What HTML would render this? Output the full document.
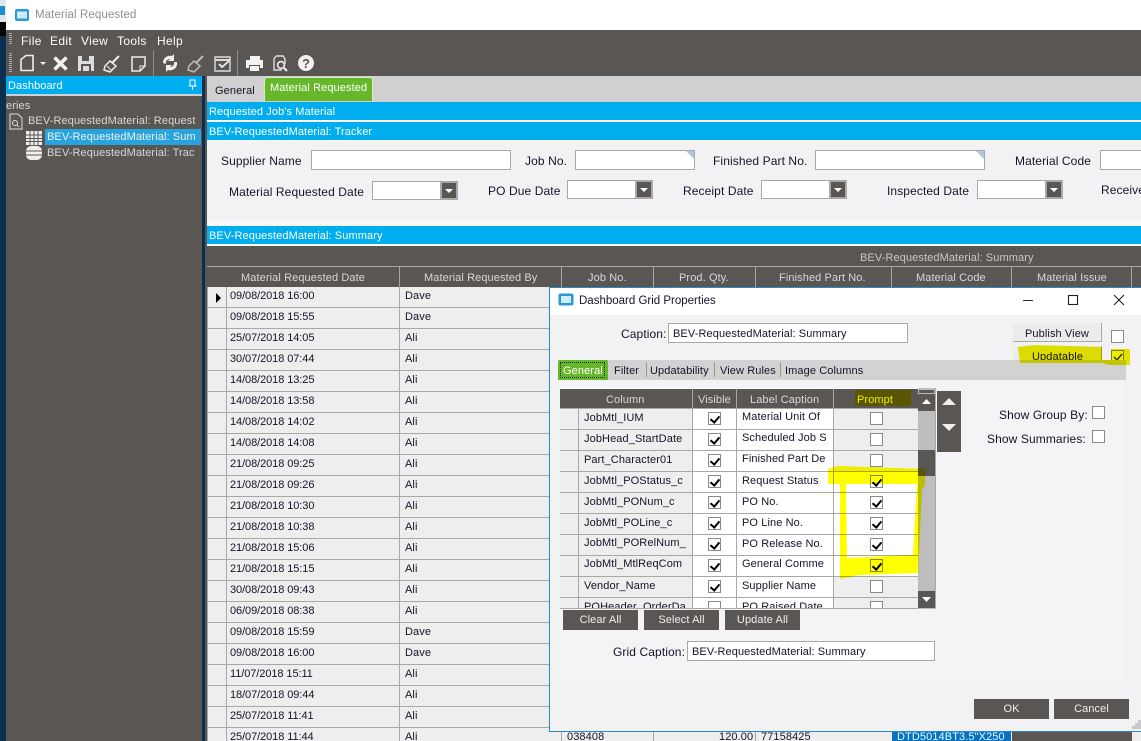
<!DOCTYPE html>
<html><head><meta charset="utf-8"><title>Material Requested</title>
<style>
html,body{margin:0;padding:0;background:#fff}
#p{position:relative;width:1141px;height:741px;overflow:hidden;font:11px "Liberation Sans",sans-serif;color:#141428;letter-spacing:.1px}
#p div{position:absolute;box-sizing:border-box}
.t{position:absolute;white-space:nowrap;line-height:14px;height:14px;margin-top:1px}
.t.f{font-size:12px;letter-spacing:.1px;margin-top:0}
.t.d{letter-spacing:-.08px}
.t.m{font-size:12px;letter-spacing:.35px;margin-top:0;color:#fff}
.w{color:#fff}.l{color:#d8d8d8}
.cy{background:#00aeef;left:207px;width:934px;height:18px;color:#fff;padding:3px 0 0 2px;line-height:14px;white-space:nowrap}
.in{background:#fff;border:1px solid #a8a8a8}
.co{background:#fff;border:1px solid #a8a8a8;height:19px}
.ar{background:#595654;border:2px solid #a8a8a8}
.ar:after{content:"";position:absolute;left:3px;top:6px;border-left:4px solid transparent;border-right:4px solid transparent;border-top:4px solid #fff}
.vl{width:1px;background:#a8a8a8}
.hl{height:1px;background:#a8a8a8}
.cb{width:13px;height:13px;background:#fff;border:1px solid #8a8a8a}
.on:after{content:"";position:absolute;left:3px;top:1px;width:4px;height:7px;border:solid #000;border-width:0 2px 2px 0;transform:rotate(40deg)}
.dk{background:#595654;color:#f0f0f0;text-align:center;height:20px;line-height:21px}
</style></head><body><div id="p">

<!-- left strip -->
<div style="left:0;top:0;width:6px;height:22px;background:#dfe6ec"></div>
<div style="left:0;top:6px;width:5px;height:9px;background:#1b8fc9"></div>
<div style="left:0;top:22px;width:6px;height:14px;background:#050505"></div>
<div style="left:0;top:36px;width:6px;height:705px;background:#0d2f4f"></div>

<!-- title bar -->
<svg style="position:absolute;left:14px;top:8px" width="16" height="14"><rect x="1" y="1" width="14" height="12" rx="2" fill="#2a9ad6"/><rect x="3" y="3.500" width="10" height="7" fill="#cfeaf8"/></svg>
<span class="t" style="left:35px;top:8px;color:#8f8f8f;font-size:11.5px;margin-top:0">Material Requested</span>

<!-- menu + toolbar -->
<div style="left:6px;top:30px;width:1135px;height:46px;background:#595654"></div>
<div style="left:9px;top:33px;width:3px;height:12px;background:repeating-linear-gradient(#a8a8a8 0 1px,transparent 1px 2px)"></div>
<div style="left:9px;top:53px;width:3px;height:20px;background:repeating-linear-gradient(#a8a8a8 0 1px,transparent 1px 2px)"></div>
<span class="t m" style="left:21px;top:34px">File</span>
<span class="t m" style="left:50px;top:34px">Edit</span>
<span class="t m" style="left:81px;top:34px">View</span>
<span class="t m" style="left:117px;top:34px">Tools</span>
<span class="t m" style="left:157px;top:34px">Help</span>
<svg style="position:absolute;left:0;top:50px" width="330" height="26" fill="none">
<path d="M21 9.500 26 5.500h7v15H21z" stroke="#eee" stroke-width="1.600"/>
<path d="M40 12h6l-3 3z" fill="#eee"/>
<path d="M54.500 7.500l12 12M66.500 7.500l-12 12" stroke="#f2f2f2" stroke-width="3.600"/>
<path d="M78 6h16v15H78z" fill="#ddd"/><path d="M82 6h7v5h-7z" fill="#595654"/><path d="M81 14h10v7H81z" fill="#595654"/><path d="M83 16h6v5h-6z" fill="#ddd"/>
<path d="M119 6l-7 7" stroke="#eee" stroke-width="2"/><path d="M110 11l6 5-6 6-6-2 1-4z" stroke="#eee" stroke-width="1.500"/><path d="M107 16l4 4" stroke="#eee"/>
<path d="M132 7h13v9l-5 5h-8z" stroke="#eee" stroke-width="1.500"/><path d="M140 21v-5h5" stroke="#eee"/>
<path d="M153.500 0v26" stroke="#8c8c8c"/>
<path d="M163 13a7 7 0 0 1 9-7l2-2v7h-6l2-2a4 4 0 0 0-4 5zM177 12a7 7 0 0 1-9 8l-2 2v-7h6l-2 2a4 4 0 0 0 4-5z" fill="#eee"/>
<path d="M203 6l-7 7" stroke="#bbb" stroke-width="2"/><path d="M194 11l6 5-6 6-6-2 1-4z" stroke="#bbb" stroke-width="1.500"/>
<path d="M215 7h15v14h-15z" stroke="#ddd" stroke-width="1.400"/><path d="M215 10h15" stroke="#ddd" stroke-width="2"/><path d="M219 14l3 3 7-6" stroke="#eee" stroke-width="1.800"/>
<path d="M237.500 0v26" stroke="#8c8c8c"/>
<path d="M250 6h10v4h-10zM246 10h17v8h-3v-3h-11v3h-3zM250 16h9v5h-9z" fill="#f2f2f2"/>
<path d="M276 6h7l2 3v5M276 6l-2 3v11h8" stroke="#ddd" stroke-width="1.400"/><circle cx="281" cy="15" r="3.400" stroke="#eee" stroke-width="1.600"/><path d="M284 18l3 3" stroke="#eee" stroke-width="2"/>
<circle cx="306" cy="13" r="8" fill="#f2f2f2"/>
<text x="306" y="18" text-anchor="middle" font-family="Liberation Sans" font-weight="bold" font-size="13" fill="#595654">?</text>
</svg>

<!-- left panel -->
<div style="left:6px;top:76px;width:196px;height:665px;background:#595654"></div>
<div style="left:6px;top:76px;width:196px;height:18px;background:#00aeef"></div>
<div style="left:6px;top:94px;width:196px;height:2px;background:#d0d0d0"></div>
<span class="t w" style="left:8px;top:78px">Dashboard</span>
<svg style="position:absolute;left:187px;top:79px" width="11" height="12"><path d="M3 1h5v6H3zM1.500 7h8M5.500 7v4" stroke="#fff" fill="none"/></svg>
<div style="left:202px;top:76px;width:3px;height:665px;background:#0d2f4f"></div>
<div style="left:205px;top:76px;width:2px;height:665px;background:#595654"></div>
<span class="t l" style="left:6px;top:98px">eries</span>
<svg style="position:absolute;left:9px;top:113px" width="14" height="17" fill="none"><path d="M1 1h8l4 4v11H1z" stroke="#ddd"/><circle cx="6" cy="10" r="2.500" stroke="#ddd"/><path d="M8 12l2 2" stroke="#ddd"/></svg>
<span class="t l" style="left:28px;top:113px">BEV-RequestedMaterial: Request</span>
<div style="left:45px;top:129px;width:156px;height:16px;background:#29a3dd"></div>
<svg style="position:absolute;left:26px;top:131px" width="16" height="14"><rect width="16" height="14" fill="#eee"/><path d="M0 4h16M0 7.500h16M0 10.500h16M4 0v14M8 0v14M12 0v14" stroke="#595654"/></svg>
<span class="t l" style="left:47px;top:129px;color:#f0f0f0">BEV-RequestedMaterial: Sum</span>
<svg style="position:absolute;left:26px;top:146px" width="16" height="14"><rect width="16" height="14" rx="5" fill="#eee"/><path d="M0 5h16M0 9h16" stroke="#595654"/></svg>
<span class="t l" style="left:47px;top:145px">BEV-RequestedMaterial: Trac</span>

<!-- main tabs -->
<div style="left:207px;top:76px;width:934px;height:26px;background:#d0d0d0"></div>
<span class="t" style="left:215px;top:83px">General</span>
<div style="left:264px;top:77px;width:109px;height:24px;background:#66b82a;border:1px solid #d8ecc8;border-bottom:0;border-radius:3px 3px 0 0"></div>
<span class="t w" style="left:270px;top:80px">Material Requested</span>
<div class="cy" style="top:102px">Requested Job's Material</div>
<div style="left:207px;top:120px;width:934px;height:2px;background:#fff"></div>
<div class="cy" style="top:122px">BEV-RequestedMaterial: Tracker</div>

<!-- filter panel -->
<div style="left:207px;top:140px;width:934px;height:86px;background:#f8f8fa"></div>
<div style="left:207px;top:142px;width:934px;height:79px;background:#f2f2f5"></div>
<span class="t f" style="left:221px;top:154px">Supplier Name</span>
<div class="in" style="left:311px;top:150px;width:200px;height:20px"></div>
<span class="t f" style="left:525px;top:154px">Job No.</span>
<div class="in" style="left:575px;top:150px;width:120px;height:20px"></div>
<svg style="position:absolute;left:686px;top:151px" width="8" height="8"><path d="M0 0h8v8z" fill="#aec6e4"/></svg>
<span class="t f" style="left:713px;top:154px">Finished Part No.</span>
<div class="in" style="left:815px;top:150px;width:170px;height:20px"></div>
<svg style="position:absolute;left:976px;top:151px" width="8" height="8"><path d="M0 0h8v8z" fill="#aec6e4"/></svg>
<span class="t f" style="left:1015px;top:154px">Material Code</span>
<div class="in" style="left:1100px;top:150px;width:60px;height:20px"></div>

<span class="t f" style="left:229px;top:185px">Material Requested Date</span>
<div class="co" style="left:372px;top:181px;width:86px"><div class="ar" style="right:-1px;top:-1px;width:18px;height:19px"></div></div>
<span class="t f" style="left:488px;top:184px">PO Due Date</span>
<div class="co" style="left:567px;top:180px;width:86px"><div class="ar" style="right:-1px;top:-1px;width:18px;height:19px"></div></div>
<span class="t f" style="left:683px;top:184px">Receipt Date</span>
<div class="co" style="left:761px;top:180px;width:86px"><div class="ar" style="right:-1px;top:-1px;width:18px;height:19px"></div></div>
<span class="t f" style="left:887px;top:184px">Inspected Date</span>
<div class="co" style="left:977px;top:180px;width:86px"><div class="ar" style="right:-1px;top:-1px;width:18px;height:19px"></div></div>
<span class="t f" style="left:1101px;top:183px">Receive</span>

<div class="cy" style="top:226px">BEV-RequestedMaterial: Summary</div>

<!-- main grid -->
<div style="left:207px;top:244px;width:934px;height:497px;background:#fff"></div>
<div style="left:207px;top:246px;width:934px;height:41px;background:#595654"></div>
<div style="left:207px;top:266px;width:934px;height:1px;background:#a8a8a8"></div>
<span class="t" style="left:860px;top:250px;color:#c8c8c8">BEV-RequestedMaterial: Summary</span>
<div class="vl" style="left:399px;top:267px;height:20px"></div><div class="vl" style="left:561px;top:267px;height:20px"></div><div class="vl" style="left:653px;top:267px;height:20px"></div><div class="vl" style="left:755px;top:267px;height:20px"></div><div class="vl" style="left:891px;top:267px;height:20px"></div><div class="vl" style="left:1011px;top:267px;height:20px"></div><div class="vl" style="left:1131px;top:267px;height:20px"></div>
<span class="t l" style="left:241px;top:270px">Material Requested Date</span>
<span class="t l" style="left:424px;top:270px">Material Requested By</span>
<span class="t l" style="left:588px;top:270px">Job No.</span>
<span class="t l" style="left:679px;top:270px">Prod. Qty.</span>
<span class="t l" style="left:779px;top:270px">Finished Part No.</span>
<span class="t l" style="left:916px;top:270px">Material Code</span>
<span class="t l" style="left:1037px;top:270px">Material Issue</span>

<div style="left:207px;top:287px;width:343px;height:454px;background:#eeeeee"></div>
<div class="vl" style="left:207px;top:287px;height:454px"></div>
<div class="vl" style="left:226px;top:287px;height:454px"></div>
<div class="vl" style="left:399px;top:287px;height:454px"></div>
<div class="hl" style="left:207px;top:307px;width:343px"></div><div class="hl" style="left:207px;top:328px;width:343px"></div><div class="hl" style="left:207px;top:349px;width:343px"></div><div class="hl" style="left:207px;top:370px;width:343px"></div><div class="hl" style="left:207px;top:391px;width:343px"></div><div class="hl" style="left:207px;top:412px;width:343px"></div><div class="hl" style="left:207px;top:433px;width:343px"></div><div class="hl" style="left:207px;top:454px;width:343px"></div><div class="hl" style="left:207px;top:475px;width:343px"></div><div class="hl" style="left:207px;top:496px;width:343px"></div><div class="hl" style="left:207px;top:517px;width:343px"></div><div class="hl" style="left:207px;top:538px;width:343px"></div><div class="hl" style="left:207px;top:559px;width:343px"></div><div class="hl" style="left:207px;top:580px;width:343px"></div><div class="hl" style="left:207px;top:601px;width:343px"></div><div class="hl" style="left:207px;top:622px;width:343px"></div><div class="hl" style="left:207px;top:643px;width:343px"></div><div class="hl" style="left:207px;top:664px;width:343px"></div><div class="hl" style="left:207px;top:685px;width:343px"></div><div class="hl" style="left:207px;top:706px;width:343px"></div><div class="hl" style="left:207px;top:727px;width:343px"></div>
<svg style="position:absolute;left:215px;top:292px" width="7" height="12"><path d="M1 1l5 5-5 5z" fill="#000"/></svg>

<span class="t d" style="left:230px;top:288px">09/08/2018 16:00</span><span class="t" style="left:405px;top:288px">Dave</span>
<span class="t d" style="left:230px;top:309px">09/08/2018 15:55</span><span class="t" style="left:405px;top:309px">Dave</span>
<span class="t d" style="left:230px;top:330px">25/07/2018 14:05</span><span class="t" style="left:405px;top:330px">Ali</span>
<span class="t d" style="left:230px;top:351px">30/07/2018 07:44</span><span class="t" style="left:405px;top:351px">Ali</span>
<span class="t d" style="left:230px;top:372px">14/08/2018 13:25</span><span class="t" style="left:405px;top:372px">Ali</span>
<span class="t d" style="left:230px;top:393px">14/08/2018 13:58</span><span class="t" style="left:405px;top:393px">Ali</span>
<span class="t d" style="left:230px;top:414px">14/08/2018 14:02</span><span class="t" style="left:405px;top:414px">Ali</span>
<span class="t d" style="left:230px;top:435px">14/08/2018 14:08</span><span class="t" style="left:405px;top:435px">Ali</span>
<span class="t d" style="left:230px;top:456px">21/08/2018 09:25</span><span class="t" style="left:405px;top:456px">Ali</span>
<span class="t d" style="left:230px;top:477px">21/08/2018 09:26</span><span class="t" style="left:405px;top:477px">Ali</span>
<span class="t d" style="left:230px;top:498px">21/08/2018 10:30</span><span class="t" style="left:405px;top:498px">Ali</span>
<span class="t d" style="left:230px;top:519px">21/08/2018 10:38</span><span class="t" style="left:405px;top:519px">Ali</span>
<span class="t d" style="left:230px;top:540px">21/08/2018 15:06</span><span class="t" style="left:405px;top:540px">Ali</span>
<span class="t d" style="left:230px;top:561px">21/08/2018 15:15</span><span class="t" style="left:405px;top:561px">Ali</span>
<span class="t d" style="left:230px;top:582px">30/08/2018 09:43</span><span class="t" style="left:405px;top:582px">Ali</span>
<span class="t d" style="left:230px;top:603px">06/09/2018 08:38</span><span class="t" style="left:405px;top:603px">Ali</span>
<span class="t d" style="left:230px;top:624px">09/08/2018 15:59</span><span class="t" style="left:405px;top:624px">Dave</span>
<span class="t d" style="left:230px;top:645px">09/08/2018 16:00</span><span class="t" style="left:405px;top:645px">Dave</span>
<span class="t d" style="left:230px;top:666px">11/07/2018 15:11</span><span class="t" style="left:405px;top:666px">Ali</span>
<span class="t d" style="left:230px;top:687px">18/07/2018 09:44</span><span class="t" style="left:405px;top:687px">Ali</span>
<span class="t d" style="left:230px;top:708px">25/07/2018 11:41</span><span class="t" style="left:405px;top:708px">Ali</span>
<span class="t d" style="left:230px;top:729px">25/07/2018 11:44</span><span class="t" style="left:405px;top:729px">Ali</span>

<!-- bottom row behind dialog -->
<div style="left:550px;top:731px;width:591px;height:10px;background:#eeeeee"></div>
<div class="vl" style="left:561px;top:731px;height:10px"></div><div class="vl" style="left:653px;top:731px;height:10px"></div><div class="vl" style="left:755px;top:731px;height:10px"></div>
<span class="t" style="left:567px;top:729px">038408</span>
<span class="t" style="left:719px;top:729px">120.00</span>
<span class="t" style="left:761px;top:729px">77158425</span>
<div style="left:892px;top:731px;width:119px;height:10px;background:#0a70c4"></div>
<span class="t" style="left:897px;top:729px;color:#dff;height:12px;overflow:hidden">DTD5014BT3.5"X250</span>
<div style="left:1012px;top:731px;width:120px;height:10px;background:#595654"></div>

<!-- dialog -->
<div style="left:549px;top:287px;width:592px;height:445px;background:#f2f2f5;border:1px solid #2a88cc;border-right:0"></div>
<div style="left:550px;top:288px;width:591px;height:27px;background:#fff"></div>
<svg style="position:absolute;left:558px;top:293px" width="16" height="13"><rect x=".5" y=".5" width="15" height="12" rx="2" fill="#2a9ad6"/><rect x="3" y="3" width="10" height="7" fill="#cfeaf8"/></svg>
<span class="t" style="left:579px;top:293px;font-size:11.500px;letter-spacing:0">Dashboard Grid Properties</span>
<svg style="position:absolute;left:1020px;top:292px" width="110" height="16" fill="none" stroke="#222"><path d="M3 8.500h10"/><rect x="48.500" y="3.500" width="9" height="9" stroke-width="1.100"/><path d="M94 3l10 10M104 3 94 13" stroke-width="1.100"/></svg>

<span class="t f" style="left:621px;top:327px">Caption:</span>
<div class="in" style="left:668px;top:323px;width:240px;height:20px"></div>
<span class="t" style="left:673px;top:326px">BEV-RequestedMaterial: Summary</span>

<div style="left:1013px;top:323px;width:89px;height:19px;background:#ececec;border-right:1px solid #a8a8a8;border-bottom:1px solid #a8a8a8"></div>
<span class="t" style="left:1025px;top:326px">Publish View</span>
<div class="cb" style="left:1111px;top:330px"></div>
<div style="left:1013px;top:346px;width:89px;height:20px;background:#ececec;border-right:1px solid #a8a8a8;border-bottom:1px solid #a8a8a8"></div>
<span class="t" style="left:1032px;top:349px">Updatable</span>
<div class="cb" style="left:1111px;top:350px"></div>
<svg style="position:absolute;left:1112px;top:351px" width="12" height="12" fill="none"><path d="M2 6l3 3 5-6" stroke="#333" stroke-width="1.400"/></svg>

<!-- inner panel -->
<div style="left:558px;top:360px;width:568px;height:322px;background:#f4f4f7;border:1px solid #ececef;border-top:0"></div>
<div style="left:558px;top:360px;width:568px;height:20px;background:#d2d2d2"></div>
<div style="left:558px;top:360px;width:50px;height:20px;background:#66b82a;border-radius:2px 2px 0 0"></div>
<div style="left:560px;top:362px;width:45px;height:16px;border:1px dotted #222"></div>
<span class="t w" style="left:563px;top:363px">General</span>
<span class="t" style="left:614px;top:363px">Filter</span>
<div class="vl" style="left:646px;top:362px;height:15px;background:#999"></div>
<span class="t" style="left:650px;top:363px">Updatability</span>
<div class="vl" style="left:714px;top:362px;height:15px;background:#999"></div>
<span class="t" style="left:720px;top:363px">View Rules</span>
<div class="vl" style="left:780px;top:362px;height:15px;background:#999"></div>
<span class="t" style="left:785px;top:363px">Image Columns</span>

<!-- properties grid -->
<div style="left:560px;top:388px;width:376px;height:221px;background:#fff;overflow:hidden"></div>
<div style="left:560px;top:408px;width:18px;height:200px;background:#eeeeee"></div>
<div style="left:578px;top:408px;width:114px;height:200px;background:#eeeeee"></div>
<div style="left:833px;top:408px;width:85px;height:63px;background:#eeeeee"></div>
<div style="left:833px;top:576px;width:85px;height:32px;background:#eeeeee"></div>
<div style="left:560px;top:389px;width:358px;height:19px;background:#595654"></div>
<div class="vl" style="left:692px;top:389px;height:219px"></div>
<div class="vl" style="left:736px;top:389px;height:219px"></div>
<div class="vl" style="left:833px;top:389px;height:219px"></div>
<div class="vl" style="left:578px;top:408px;height:200px"></div>
<span class="t l" style="left:606px;top:392px">Column</span>
<span class="t l" style="left:698px;top:392px">Visible</span>
<span class="t l" style="left:750px;top:392px">Label Caption</span>
<div style="left:855px;top:390px;width:56px;height:16px;background:#5a5500"></div>
<span class="t" style="left:857px;top:392px;color:#eeee00">Prompt</span>
<div class="hl" style="left:560px;top:408px;width:358px"></div><div class="hl" style="left:560px;top:429px;width:358px"></div><div class="hl" style="left:560px;top:450px;width:358px"></div><div class="hl" style="left:560px;top:471px;width:358px"></div><div class="hl" style="left:560px;top:492px;width:358px"></div><div class="hl" style="left:560px;top:513px;width:358px"></div><div class="hl" style="left:560px;top:534px;width:358px"></div><div class="hl" style="left:560px;top:555px;width:358px"></div><div class="hl" style="left:560px;top:576px;width:358px"></div><div class="hl" style="left:560px;top:597px;width:358px"></div><div class="hl" style="left:560px;top:608px;width:376px"></div>

<span class="t" style="left:584px;top:410px">JobMtl_IUM</span><span class="t" style="left:742px;top:409px">Material Unit Of</span>
<span class="t" style="left:584px;top:431px">JobHead_StartDate</span><span class="t" style="left:742px;top:430px">Scheduled Job S</span>
<span class="t" style="left:584px;top:452px">Part_Character01</span><span class="t" style="left:742px;top:451px">Finished Part De</span>
<span class="t" style="left:584px;top:473px">JobMtl_POStatus_c</span><span class="t" style="left:742px;top:473px">Request Status</span>
<span class="t" style="left:584px;top:494px">JobMtl_PONum_c</span><span class="t" style="left:742px;top:494px">PO No.</span>
<span class="t" style="left:584px;top:515px">JobMtl_POLine_c</span><span class="t" style="left:742px;top:515px">PO Line No.</span>
<span class="t" style="left:584px;top:535px">JobMtl_PORelNum_</span><span class="t" style="left:742px;top:536px">PO Release No.</span>
<span class="t" style="left:584px;top:556px">JobMtl_MtlReqCom</span><span class="t" style="left:742px;top:556px">General Comme</span>
<span class="t" style="left:584px;top:578px">Vendor_Name</span><span class="t" style="left:742px;top:578px">Supplier Name</span>
<span class="t" style="left:584px;top:599px;height:8px;overflow:hidden">POHeader_OrderDa</span><span class="t" style="left:742px;top:599px;height:8px;overflow:hidden">PO Raised Date</span>

<div class="cb on" style="left:708px;top:412px"></div><div class="cb" style="left:870px;top:412px"></div>
<div class="cb on" style="left:708px;top:433px"></div><div class="cb" style="left:870px;top:433px"></div>
<div class="cb on" style="left:708px;top:454px"></div><div class="cb" style="left:870px;top:454px"></div>
<div class="cb on" style="left:708px;top:475px"></div><div class="cb on" style="left:870px;top:475px"></div>
<div class="cb on" style="left:708px;top:496px"></div><div class="cb on" style="left:870px;top:496px"></div>
<div class="cb on" style="left:708px;top:517px"></div><div class="cb on" style="left:870px;top:517px"></div>
<div class="cb on" style="left:708px;top:538px"></div><div class="cb on" style="left:870px;top:538px"></div>
<div class="cb on" style="left:708px;top:559px"></div><div class="cb on" style="left:870px;top:559px"></div>
<div class="cb on" style="left:708px;top:580px"></div><div class="cb" style="left:870px;top:580px"></div>
<div style="left:708px;top:601px;width:13px;height:7px;background:#fff;border:1px solid #8a8a8a;border-bottom:0"></div>
<div style="left:870px;top:601px;width:13px;height:7px;background:#fff;border:1px solid #8a8a8a;border-bottom:0"></div>

<!-- scrollbar -->
<div style="left:918px;top:388px;width:18px;height:221px;background:#bdbdbd;border-right:1px solid #a8a8a8"></div>
<div style="left:919px;top:390px;width:15px;height:3px;background:#595654"></div>
<div style="left:918px;top:394px;width:17px;height:17px;background:#595654"></div>
<svg style="position:absolute;left:922px;top:399px" width="9" height="6"><path d="M0 5 4.500 0 9 5z" fill="#fff"/></svg>
<div style="left:918px;top:450px;width:17px;height:26px;background:#595654"></div>
<div style="left:918px;top:591px;width:17px;height:17px;background:#595654"></div>
<svg style="position:absolute;left:922px;top:597px" width="9" height="6"><path d="M0 0h9L4.500 5z" fill="#fff"/></svg>
<div style="left:937px;top:391px;width:24px;height:61px;background:#595654"></div>
<svg style="position:absolute;left:941px;top:397px" width="16" height="48"><path d="M1 8 8 1l7 7zM1 27h14l-7 7z" fill="#eee"/></svg>

<span class="t f" style="left:999px;top:408px">Show Group By:</span>
<div class="cb" style="left:1092px;top:406px"></div>
<span class="t f" style="left:987px;top:432px">Show Summaries:</span>
<div class="cb" style="left:1092px;top:430px"></div>

<div class="dk" style="left:563px;top:610px;width:75px">Clear All</div>
<div class="dk" style="left:644px;top:610px;width:75px">Select All</div>
<div class="dk" style="left:725px;top:610px;width:75px">Update All</div>

<span class="t f" style="left:613px;top:645px">Grid Caption:</span>
<div class="in" style="left:687px;top:641px;width:248px;height:20px"></div>
<span class="t" style="left:692px;top:644px">BEV-RequestedMaterial: Summary</span>

<div class="dk" style="left:974px;top:699px;width:75px">OK</div>
<div class="dk" style="left:1054px;top:699px;width:75px">Cancel</div>
<svg style="position:absolute;left:1132px;top:720px" width="9" height="10"><path d="M6 0h3v3H6zM3 3h3v3H3zM6 3h3v3H6zM0 6h3v3H0zM3 6h3v3H3zM6 6h3v3H6z" fill="#c8c8c8"/></svg>

<!-- highlighter -->
<svg style="position:absolute;left:0;top:0;mix-blend-mode:multiply;pointer-events:none" width="1141" height="741">
<path d="M828 469 838 466 925 469 925 484 922 490 918 573 860 575 840 579 840 484 828 484ZM846 484 847 558 913 555 917 484Z" fill="#ffff00" fill-rule="evenodd"/>
<path d="M1018 347 1034 345 1102 347 1102 360 1111 360 1111 349 1130 349 1130 365 1110 365 1102 363 1020 363Z" fill="#eeee00"/>
</svg>

</div></body></html>
